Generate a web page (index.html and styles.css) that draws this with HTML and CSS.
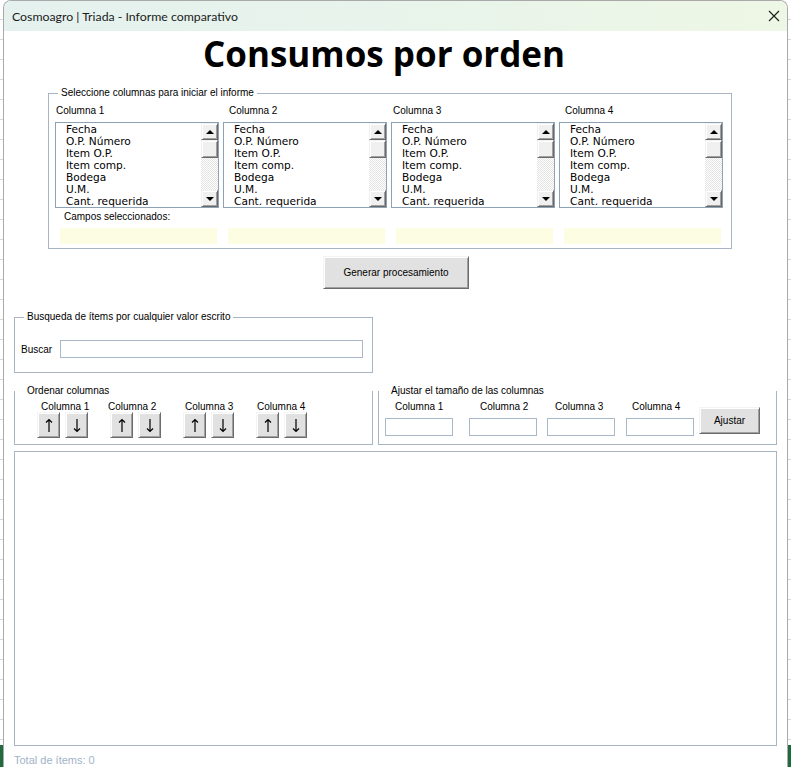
FILE: index.html
```html
<!DOCTYPE html>
<html lang="es">
<head>
<meta charset="utf-8">
<title>Consumos por orden</title>
<link rel="stylesheet" href="styles.css">
</head>
<body>
<div class="window">
  <div class="titlebar">
    <span class="title">Cosmoagro | Triada - Informe comparativo</span>
    <svg class="close" width="12" height="12" viewBox="0 0 12 12"><path d="M1 1 L11 11 M11 1 L1 11" stroke="#1a1a1a" stroke-width="1.1" fill="none"/></svg>
  </div>
  <div class="content">
    <h1 class="heading">Consumos por orden</h1>

    <fieldset class="frame frame-select">
      <legend>Seleccione columnas para iniciar el informe</legend>
      <div class="cols">
        <div class="col">
          <div class="col-label">Columna 1</div>
          <div class="listbox">
            <div class="items"><div>Fecha</div><div>O.P. Número</div><div>Item O.P.</div><div>Item comp.</div><div>Bodega</div><div>U.M.</div><div>Cant. requerida</div></div>
            <div class="sb"><div class="sb-btn"><span class="tri up"></span></div><div class="sb-thumb"></div><div class="sb-track"></div><div class="sb-btn"><span class="tri down"></span></div></div>
          </div>
        </div>
        <div class="col">
          <div class="col-label">Columna 2</div>
          <div class="listbox">
            <div class="items"><div>Fecha</div><div>O.P. Número</div><div>Item O.P.</div><div>Item comp.</div><div>Bodega</div><div>U.M.</div><div>Cant. requerida</div></div>
            <div class="sb"><div class="sb-btn"><span class="tri up"></span></div><div class="sb-thumb"></div><div class="sb-track"></div><div class="sb-btn"><span class="tri down"></span></div></div>
          </div>
        </div>
        <div class="col">
          <div class="col-label">Columna 3</div>
          <div class="listbox">
            <div class="items"><div>Fecha</div><div>O.P. Número</div><div>Item O.P.</div><div>Item comp.</div><div>Bodega</div><div>U.M.</div><div>Cant. requerida</div></div>
            <div class="sb"><div class="sb-btn"><span class="tri up"></span></div><div class="sb-thumb"></div><div class="sb-track"></div><div class="sb-btn"><span class="tri down"></span></div></div>
          </div>
        </div>
        <div class="col">
          <div class="col-label">Columna 4</div>
          <div class="listbox">
            <div class="items"><div>Fecha</div><div>O.P. Número</div><div>Item O.P.</div><div>Item comp.</div><div>Bodega</div><div>U.M.</div><div>Cant. requerida</div></div>
            <div class="sb"><div class="sb-btn"><span class="tri up"></span></div><div class="sb-thumb"></div><div class="sb-track"></div><div class="sb-btn"><span class="tri down"></span></div></div>
          </div>
        </div>
      </div>
      <div class="campos">Campos seleccionados:</div>
      <div class="selected">
        <div class="sel-box"></div><div class="sel-box"></div><div class="sel-box"></div><div class="sel-box"></div>
      </div>
    </fieldset>

    <div class="gen-row"><div class="btn btn-gen">Generar procesamiento</div></div>

    <fieldset class="frame frame-search">
      <legend>Busqueda de ítems por cualquier valor escrito</legend>
      <div class="search-row">
        <span class="search-label">Buscar</span>
        <div class="input input-search"></div>
      </div>
    </fieldset>

    <div class="tools">
      <fieldset class="frame frame-open frame-order">
        <legend>Ordenar columnas</legend>
        <div class="order-grid">
          <div class="order-label">Columna 1</div>
          <div class="order-label">Columna 2</div>
          <div class="order-label">Columna 3</div>
          <div class="order-label">Columna 4</div>
          <div class="pair">
            <div class="btn btn-arrow"><svg class="arrow" width="8" height="15" viewBox="0 0 8 15"><path d="M4 1.5 V14 M1 4.5 L4 1.5 L7 4.5"/></svg></div>
            <div class="btn btn-arrow"><svg class="arrow" width="8" height="15" viewBox="0 0 8 15"><path d="M4 1 V13.5 M1 10.5 L4 13.5 L7 10.5"/></svg></div>
          </div>
          <div class="pair">
            <div class="btn btn-arrow"><svg class="arrow" width="8" height="15" viewBox="0 0 8 15"><path d="M4 1.5 V14 M1 4.5 L4 1.5 L7 4.5"/></svg></div>
            <div class="btn btn-arrow"><svg class="arrow" width="8" height="15" viewBox="0 0 8 15"><path d="M4 1 V13.5 M1 10.5 L4 13.5 L7 10.5"/></svg></div>
          </div>
          <div class="pair">
            <div class="btn btn-arrow"><svg class="arrow" width="8" height="15" viewBox="0 0 8 15"><path d="M4 1.5 V14 M1 4.5 L4 1.5 L7 4.5"/></svg></div>
            <div class="btn btn-arrow"><svg class="arrow" width="8" height="15" viewBox="0 0 8 15"><path d="M4 1 V13.5 M1 10.5 L4 13.5 L7 10.5"/></svg></div>
          </div>
          <div class="pair">
            <div class="btn btn-arrow"><svg class="arrow" width="8" height="15" viewBox="0 0 8 15"><path d="M4 1.5 V14 M1 4.5 L4 1.5 L7 4.5"/></svg></div>
            <div class="btn btn-arrow"><svg class="arrow" width="8" height="15" viewBox="0 0 8 15"><path d="M4 1 V13.5 M1 10.5 L4 13.5 L7 10.5"/></svg></div>
          </div>
        </div>
      </fieldset>
      <fieldset class="frame frame-open frame-size">
        <legend>Ajustar el tamaño de las columnas</legend>
        <div class="size-row">
          <div class="size-group"><div class="size-label">Columna 1</div><div class="input input-size"></div></div>
          <div class="size-group"><div class="size-label">Columna 2</div><div class="input input-size"></div></div>
          <div class="size-group"><div class="size-label">Columna 3</div><div class="input input-size"></div></div>
          <div class="size-group"><div class="size-label">Columna 4</div><div class="input input-size"></div></div>
          <div class="btn btn-adjust">Ajustar</div>
        </div>
      </fieldset>
    </div>

    <div class="result-box"></div>
    <div class="total">Total de ítems: 0</div>
  </div>
</div>
</body>
</html>
```

FILE: styles.css
```css
* { box-sizing: border-box; }
html, body { margin: 0; padding: 0; }
body {
  width: 791px;
  height: 767px;
  overflow: hidden;
  font-family: "Liberation Sans", Arial, sans-serif;
  font-size: 10px;
  color: #000;
  background:
    linear-gradient(to bottom, transparent 745px, #1f6b3e 745px),
    repeating-linear-gradient(to bottom, #ffffff 0 19px, #d6d6d6 19px 20px);
}

.window {
  margin-left: 3px;
  width: 785px;
  height: 767px;
  background: #fff;
  border: 1px solid #a9a9a9;
  border-bottom: none;
  border-radius: 8px 8px 0 0;
  overflow: hidden;
}

.titlebar {
  height: 30px;
  display: flex;
  align-items: center;
  justify-content: space-between;
  padding: 0 7px 0 8px;
  background: linear-gradient(to right, #e4f1ee, #e9f4ea 60%, #eef7e5);
}
.title {
  font-family: Lato, "Noto Sans", sans-serif;
  font-size: 12.3px;
  color: #1b1b1b;
}
.close { display: block; }

.content { padding: 0 9px 0 10px; }

.heading {
  margin: 3px 0 0;
  height: 40px;
  line-height: 40px;
  font-family: "Open Sans", "Noto Sans", sans-serif;
  font-weight: 700;
  font-size: 35px;
  text-align: center;
  padding-right: 24px;
  color: #000;
}

.frame {
  margin: 0;
  min-width: 0;
  border: 1px solid #a6b4c3;
}
.frame legend {
  margin-left: 3px;
  padding: 0 3px;
  line-height: 12px;
  font-size: 10px;
}

.frame-select {
  margin: 13px 0 0 34px;
  width: 684px;
  padding: 0 8px 4px 6px;
}
.cols {
  margin-top: 6px;
  display: grid;
  grid-template-columns: repeat(4, 164px);
  column-gap: 4px;
}
.col-label { line-height: 12px; height: 12px; margin-bottom: 5px; }
.col:nth-child(1) .col-label { padding-left: 1px; }
.col:nth-child(2) .col-label { padding-left: 6px; }
.col:nth-child(3) .col-label { padding-left: 2px; }
.col:nth-child(4) .col-label { padding-left: 6px; }

.listbox {
  height: 86px;
  border: 1px solid #8ea2b6;
  display: flex;
  background: #fff;
}
.items {
  flex: 1;
  padding-left: 10px;
  font-family: "DejaVu Sans", sans-serif;
  font-size: 10.6px;
  line-height: 12px;
  overflow: hidden;
  white-space: nowrap;
}
.sb {
  width: 17px;
  display: flex;
  flex-direction: column;
}
.sb-btn, .sb-thumb {
  background: #f0f0f0;
  border: 1px solid;
  border-color: #f0f0f0 #696969 #696969 #f0f0f0;
  box-shadow: inset 1px 1px 0 #fff, inset -1px -1px 0 #a0a0a0;
}
.sb-btn {
  height: 17px;
  display: flex;
  align-items: center;
  justify-content: center;
}
.sb-thumb { height: 18px; }
.sb-track {
  flex: 1;
  background: repeating-conic-gradient(#e3e3e3 0 25%, #ffffff 0 50%) 0 0 / 2px 2px;
}
.tri { width: 0; height: 0; border-left: 4px solid transparent; border-right: 4px solid transparent; }
.tri.up { border-bottom: 4px solid #000; }
.tri.down { border-top: 4px solid #000; }

.campos { margin-top: 3px; padding-left: 9px; line-height: 12px; }
.selected {
  margin-top: 5px;
  padding-left: 5px;
  display: grid;
  grid-template-columns: repeat(4, 164px);
  column-gap: 4px;
}
.sel-box { width: 157px; height: 16px; background: #fcfde2; }

.btn {
  background: #e1e1e1;
  border: 1px solid;
  border-color: #f4f4f4 #6b6b6b #6b6b6b #f4f4f4;
  box-shadow: inset 1px 1px 0 #fff, inset -1px -1px 0 #a0a0a0;
  display: flex;
  align-items: center;
  justify-content: center;
  color: #000;
}
.gen-row { margin-top: 7px; display: flex; justify-content: center; }
.btn-gen { width: 146px; height: 33px; }

.frame-search {
  margin-top: 22px;
  width: 359px;
  padding: 0 6px 14px 6px;
}
.search-row { margin-top: 17px; display: flex; align-items: center; height: 18px; }
.search-label { width: 39px; }
.input { border: 1px solid #a9b8c8; background: #fff; height: 18px; }
.input-search { width: 303px; }

.tools { margin-top: 12px; display: flex; gap: 5px; }
.frame-open { border-top: none; }
.frame-order { width: 359px; padding: 0 6px 6px 6px; }
.frame-size { width: 399px; padding: 0 6px 7px 6px; }

.order-grid {
  margin: 4px 0 0 16px;
  display: grid;
  grid-template-columns: repeat(4, 51px);
  column-gap: 22px;
}
.order-label { line-height: 11px; height: 11px; white-space: nowrap; }
.order-label:nth-child(1) { margin-left: 4px; }
.order-label:nth-child(2) { margin-left: -2px; }
.order-label:nth-child(3) { margin-left: 2px; }
.order-label:nth-child(4) { margin-left: 1px; }
.pair { display: flex; gap: 5px; }
.btn-arrow { width: 23px; height: 26px; }
.arrow { display: block; fill: none; stroke: #000; stroke-width: 1.2; }

.size-row { margin-top: 4px; display: flex; align-items: flex-end; }
.size-group { width: 68px; }
.size-group:nth-child(2) { margin-left: 16px; }
.size-group:nth-child(3) { margin-left: 10px; }
.size-group:nth-child(4) { margin-left: 11px; }
.size-label { line-height: 12px; height: 12px; margin-bottom: 5px; white-space: nowrap; }
.size-group:nth-child(1) .size-label { padding-left: 10px; }
.size-group:nth-child(2) .size-label { padding-left: 11px; }
.size-group:nth-child(3) .size-label { padding-left: 8px; }
.size-group:nth-child(4) .size-label { padding-left: 6px; }
.input-size { width: 68px; }
.btn-adjust { margin: 0 0 2px 5px; width: 61px; height: 27px; }

.result-box {
  margin-top: 6px;
  width: 763px;
  height: 295px;
  border: 1px solid #a6b4c3;
}
.total {
  margin-top: 8px;
  font-size: 11px;
  line-height: 13px;
  color: #9fb3c8;
}
```
